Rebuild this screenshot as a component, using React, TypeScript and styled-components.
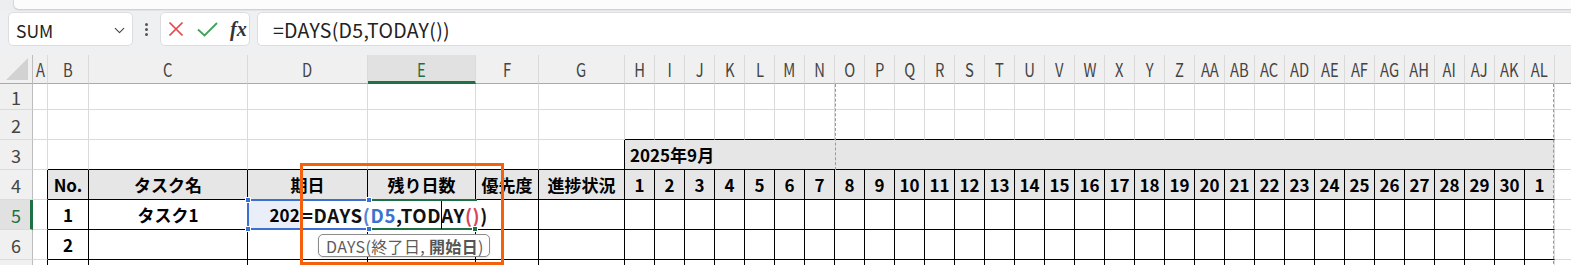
import React from 'react';
import styled, { createGlobalStyle } from 'styled-components';
import { ChevronDown } from 'lucide-react';

const GlobalStyle = createGlobalStyle`
  html, body { margin: 0; padding: 0; background: #fff; overflow: hidden; }
  body { font-family: "Noto Sans CJK JP", "Noto Sans", sans-serif; }
  * { box-sizing: border-box; }
`;

const GRID = '#dadada';
const GREEN = '#1e7145';
const BLUE = '#3b6fd0';

const Page = styled.div`
  width: 1571px;
  height: 265px;
  overflow: hidden;
  background: #fff;
`;

/* リボン下端 */
const RibbonEdge = styled.div`
  height: 11px;
  background: #eceef0;
  padding-left: 13px;
`;
const RibbonPanel = styled.div`
  height: 10px;
  background: #fcfcfc;
  border-left: 1px solid #d6d8db;
  border-bottom: 1px solid #d0d2d5;
  border-bottom-left-radius: 6px;
  box-shadow: 0 1px 2px rgba(0, 0, 0, 0.06);
`;

/* 数式バー */
const FormulaBar = styled.div`
  height: 44px;
  display: flex;
  align-items: flex-start;
  padding: 1px 0 0 8px;
  background: #eef0f2;
`;
const NameBox = styled.div`
  width: 125px;
  height: 34px;
  display: flex;
  align-items: center;
  justify-content: space-between;
  padding: 2px 4px 0 7px;
  background: #fff;
  border: 1px solid #dcdde0;
  border-radius: 5px;
  font-size: 17.5px;
  color: #222;
`;
const Dots = styled.div`
  width: 27px;
  height: 34px;
  display: flex;
  flex-direction: column;
  align-items: center;
  justify-content: center;
  gap: 2px;
  span {
    width: 3px;
    height: 3px;
    border-radius: 50%;
    background: #555;
  }
`;
const FxBox = styled.div`
  width: 90px;
  height: 34px;
  display: flex;
  align-items: center;
  gap: 13px;
  padding-left: 7px;
  background: #fff;
  border: 1px solid #dcdde0;
  border-radius: 5px;
`;
const Fx = styled.span`
  font-family: "Liberation Serif", "DejaVu Serif", serif;
  font-style: italic;
  font-weight: 700;
  font-size: 20px;
  color: #333;
  margin-left: -1px;
`;
const FormulaInput = styled.div`
  flex: 1;
  height: 34px;
  margin-left: 7px;
  padding: 1px 0 0 15px;
  display: flex;
  align-items: center;
  background: #fff;
  border: 1px solid #dcdde0;
  border-right: none;
  border-radius: 5px 0 0 5px;
  font-size: 19.5px;
  letter-spacing: 0.3px;
  color: #222;
`;

/* シート */
const Sheet = styled.div`
  position: relative;
  display: grid;
  grid-template-columns: 33px 15px 41px 159px 120px 108px 63px 86px repeat(31, 30px) 1fr;
  grid-template-rows: 29px 26px repeat(6, 30px);
`;
const Corner = styled.div`
  background: #f0f0f0;
  border-right: 1px solid #bdbdbd;
  border-bottom: 1px solid #ababab;
  display: flex;
  align-items: flex-end;
  justify-content: flex-end;
  padding: 0 3px 2px 0;
`;
const ColHead = styled.div<{ $sel?: boolean }>`
  display: flex;
  align-items: center;
  justify-content: center;
  background: ${(p) => (p.$sel ? '#e1e1e1' : '#f0f0f0')};
  color: ${(p) => (p.$sel ? GREEN : '#444')};
  border-right: 1px solid ${GRID};
  border-bottom: ${(p) => (p.$sel ? `3px solid ${GREEN}` : '1px solid #ababab')};
  padding-top: ${(p) => (p.$sel ? '2px' : '0')};
  font-size: 18px;
  overflow: hidden;
  white-space: nowrap;
`;
const HeadLabel = styled.span`
  display: inline-block;
  transform: scaleX(0.82);
`;
const HeadFiller = styled.div`
  background: #f0f0f0;
  border-bottom: 1px solid #ababab;
`;
const RowHead = styled.div<{ $sel?: boolean }>`
  display: flex;
  align-items: center;
  justify-content: center;
  background: ${(p) => (p.$sel ? '#e1e1e1' : '#f0f0f0')};
  color: ${(p) => (p.$sel ? GREEN : '#444')};
  border-right: ${(p) => (p.$sel ? `3px solid ${GREEN}` : '1px solid #bdbdbd')};
  border-bottom: 1px solid ${GRID};
  padding-left: ${(p) => (p.$sel ? '2px' : '0')};
  font-size: 18px;
`;

type Tone = 'none' | 'grey' | 'ref';
interface ICellProps {
  $r?: boolean;
  $b?: boolean;
  $tone?: Tone;
  $align?: 'flex-start' | 'center' | 'flex-end';
}
const Cell = styled.div<ICellProps>`
  display: flex;
  align-items: center;
  justify-content: ${(p) => p.$align || 'center'};
  padding: 0 4px;
  border-right: 1px solid ${(p) => (p.$r ? '#000' : GRID)};
  border-bottom: 1px solid ${(p) => (p.$b ? '#000' : GRID)};
  background: ${(p) => (p.$tone === 'grey' ? '#e6e6e6' : p.$tone === 'ref' ? '#e9eef8' : 'transparent')};
  font-weight: 700;
  font-size: 17px;
  color: #000;
  white-space: nowrap;
  overflow: hidden;
`;
const MonthCell = styled(Cell)`
  grid-column: span 31;
  padding-left: 5px;
  font-size: 17px;
`;
const Filler = styled.div`
  border-bottom: 1px solid ${GRID};
`;

/* 重なる要素 */
const RefRange = styled.div`
  position: absolute;
  left: 247px;
  top: 144px;
  width: 123px;
  height: 31px;
  border: 2px solid ${BLUE};
`;
const ActiveCell = styled.div`
  position: absolute;
  left: 369px;
  top: 144px;
  width: 108px;
  height: 31px;
  border-top: 2px solid ${GREEN};
  border-bottom: 2px solid ${GREEN};
`;
const Editor = styled.div`
  position: absolute;
  left: 301px;
  top: 146px;
  width: 190px;
  height: 27px;
  background: #fff;
  display: flex;
  align-items: center;
  padding-left: 1px;
  font-weight: 700;
  font-size: 18.6px;
  letter-spacing: 0.65px;
  color: #111;
  white-space: nowrap;
`;
const Tok = styled.span<{ $c: string }>`
  color: ${(p) => p.$c};
`;
const Caret = styled.span`
  display: inline-block;
  width: 0;
  height: 28px;
  border-left: 1px solid #000;
  margin: 0 -0.5px;
`;
const Handle = styled.div<{ $x: number; $y: number; $c: string }>`
  position: absolute;
  left: ${(p) => p.$x}px;
  top: ${(p) => p.$y}px;
  width: 6px;
  height: 6px;
  background: ${(p) => p.$c};
  border: 1px solid #fff;
`;
const Tooltip = styled.div`
  position: absolute;
  left: 318px;
  top: 179px;
  width: 172px;
  height: 23px;
  display: flex;
  align-items: center;
  padding-left: 7px;
  background: #fff;
  border: 1px solid #8c8c8c;
  border-radius: 5px;
  box-shadow: 0 1px 2px rgba(0, 0, 0, 0.12);
  font-size: 16px;
  letter-spacing: 0.35px;
  color: #5c5c5c;
  white-space: pre;
  b { font-weight: 700; color: #555; }
`;
const Callout = styled.div`
  position: absolute;
  left: 300px;
  top: 108px;
  width: 204px;
  height: 102px;
  border: 3px solid #f5600c;
`;
const PageBreak = styled.div<{ $x: number; $h: number }>`
  position: absolute;
  left: ${(p) => p.$x}px;
  top: 29px;
  height: ${(p) => p.$h}px;
  border-left: 1px dashed #9a9a9a;
`;

const letters = Array.from({ length: 38 }, (_, i) =>
  i < 26 ? String.fromCharCode(65 + i) : 'A' + String.fromCharCode(65 + i - 26)
);
const days = [...Array.from({ length: 30 }, (_, i) => String(i + 1)), '1'];
const header = ['', 'No.', 'タスク名', '期日', '残り日数', '優先度', '進捗状況', ...days];

const inTable = (r: number, c: number) => (r >= 4 && c >= 1) || (r === 3 && c >= 7);
const darkRight = (r: number, c: number) =>
  (inTable(r, c) && c !== 37) || (c === 0 && r >= 4) || (c === 6 && r === 3);
const darkBottom = (r: number, c: number) =>
  inTable(r, c) || (r === 3 && c >= 1 && c <= 6) || (r === 2 && c >= 7);

const content = (r: number, c: number): string => {
  if (r === 4) return header[c];
  if (r === 5) return ['', '1', 'タスク1', '2025/09/30'][c] || '';
  if (r === 6) return c === 1 ? '2' : '';
  return '';
};

const App: React.FC = () => {
  const rows = [1, 2, 3, 4, 5, 6, 7];
  return (
    <Page>
      <GlobalStyle />
      <RibbonEdge>
        <RibbonPanel />
      </RibbonEdge>
      <FormulaBar>
        <NameBox>
          <span>SUM</span>
          <ChevronDown size={17} strokeWidth={1.6} color="#444" />
        </NameBox>
        <Dots>
          <span />
          <span />
          <span />
        </Dots>
        <FxBox>
          <svg width="16" height="16" viewBox="0 0 16 16">
            <path d="M1.5 1.5 L14.5 14.5 M14.5 1.5 L1.5 14.5" stroke="#e5464b" strokeWidth="1.7" fill="none" />
          </svg>
          <svg width="21" height="15" viewBox="0 0 21 15">
            <path d="M1 7.5 L7.5 13.5 L20 1" stroke="#3ea35a" strokeWidth="1.8" fill="none" />
          </svg>
          <Fx>fx</Fx>
        </FxBox>
        <FormulaInput>=DAYS(D5,TODAY())</FormulaInput>
      </FormulaBar>

      <Sheet>
        <Corner>
          <svg width="23" height="23" viewBox="0 0 23 23">
            <polygon points="22,0 22,22 0,22" fill="#d2d2d2" />
          </svg>
        </Corner>
        {letters.map((l) => (
          <ColHead key={l} $sel={l === 'E'}>
            <HeadLabel>{l}</HeadLabel>
          </ColHead>
        ))}
        <HeadFiller />

        {rows.map((r) => (
          <React.Fragment key={r}>
            <RowHead $sel={r === 5}>{r}</RowHead>
            {(r === 3 ? letters.slice(0, 7) : letters).map((l, c) => (
              <Cell
                key={l}
                $r={darkRight(r, c)}
                $b={darkBottom(r, c)}
                $tone={r === 4 && c >= 1 ? 'grey' : r === 5 && c === 3 ? 'ref' : 'none'}
                $align={r === 5 && c === 3 ? 'flex-end' : 'center'}
              >
                {content(r, c)}
              </Cell>
            ))}
            {r === 3 && (
              <MonthCell $b $tone="grey" $align="flex-start">
                2025年9月
              </MonthCell>
            )}
            <Filler />
          </React.Fragment>
        ))}

        <PageBreak $x={835} $h={86} />
        <PageBreak $x={1553} $h={190} />

        <RefRange />
        <ActiveCell />
        <Editor>
          =DAYS<Tok $c="#4f86d6">(</Tok>
          <Tok $c="#3a72d0">D5</Tok>,TOD<Caret />AY<Tok $c="#d2455c">()</Tok>)
        </Editor>
        <Handle $x={245} $y={142} $c={BLUE} />
        <Handle $x={245} $y={171} $c={BLUE} />
        <Handle $x={366} $y={142} $c={BLUE} />
        <Handle $x={366} $y={171} $c={BLUE} />
        <Handle $x={472} $y={171} $c={GREEN} />
        <Tooltip>
          {'DAYS(終了日, '}
          <b>開始日</b>
          {')'}
        </Tooltip>
        <Callout />
      </Sheet>
    </Page>
  );
};

export default App;
